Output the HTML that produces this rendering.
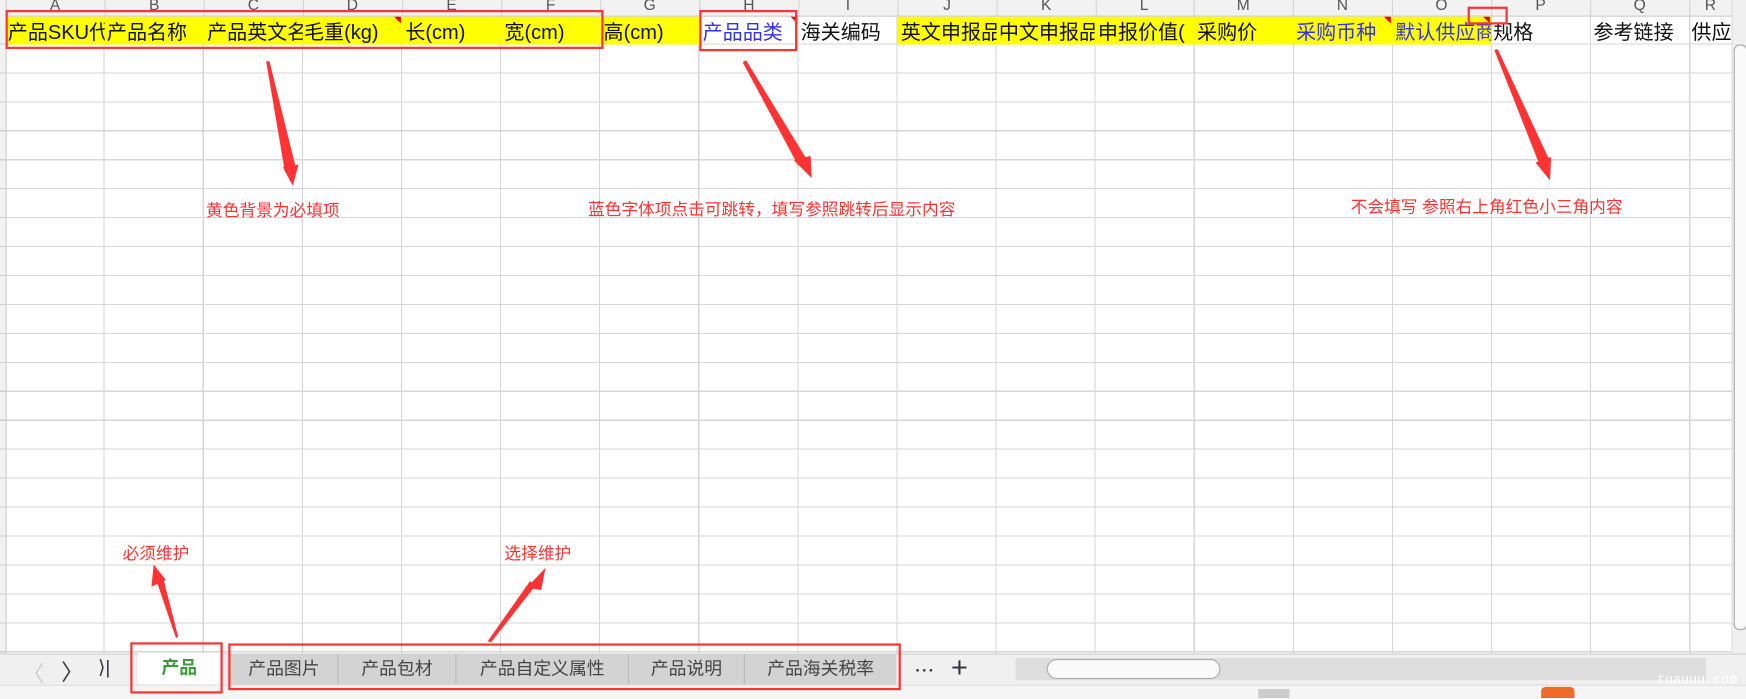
<!DOCTYPE html>
<html><head><meta charset="utf-8"><style>
html,body{margin:0;padding:0;background:#fff;overflow:hidden;width:1746px;height:698px}
#w{position:absolute;left:0;top:0;width:1568px;height:627px;transform:scale(1.11352,1.1132);transform-origin:0 0;font-family:"Liberation Sans","Noto Sans CJK SC",sans-serif}
.a{position:absolute}
.colh{position:absolute;top:0;height:14px;width:89px;text-align:center;font-size:14px;line-height:8px;color:#555;border-right:1px solid #d4d4d4;overflow:hidden}
.c{position:absolute;top:14px;height:26px;line-height:30px;font-size:18px;color:#111;white-space:nowrap;overflow:hidden}
.red{position:absolute;border:2px solid #f33;box-sizing:border-box}
.n{position:absolute;color:#f33;font-size:15px;white-space:nowrap}
.tab{position:absolute;top:588px;height:27px;line-height:27px;font-size:16px;color:#444;text-align:center;border-right:1px solid #b8b8b8;background:#d3d3d3}
</style></head><body><div id="w">
<div class="a" style="left:5px;top:14px;width:1550px;height:573px;background-image:repeating-linear-gradient(to bottom,transparent 0 25px,#d6d6d6 25px 26px),repeating-linear-gradient(to right,transparent 0 88px,#d6d6d6 88px 89px)"></div>
<div class="a" style="left:0;top:0;width:1555px;height:14px;background:#f2f2f2;border-bottom:1px solid #ccc"></div>
<div class="a" style="left:0;top:0;width:5px;height:587px;background:#f2f2f2;border-right:1px solid #ccc"></div>
<div class="a" style="left:0;top:14px;width:5px;height:573px;background-image:repeating-linear-gradient(to bottom,transparent 0 25px,#ccc 25px 26px)"></div>
<div class="colh" style="left:5px">A</div><div class="colh" style="left:94px">B</div><div class="colh" style="left:183px">C</div><div class="colh" style="left:272px">D</div><div class="colh" style="left:361px">E</div><div class="colh" style="left:450px">F</div><div class="colh" style="left:539px">G</div><div class="colh" style="left:628px">H</div><div class="colh" style="left:717px">I</div><div class="colh" style="left:806px">J</div><div class="colh" style="left:895px">K</div><div class="colh" style="left:983px">L</div><div class="colh" style="left:1072px">M</div><div class="colh" style="left:1161px">N</div><div class="colh" style="left:1250px">O</div><div class="colh" style="left:1339px">P</div><div class="colh" style="left:1428px">Q</div><div class="colh" style="left:1517px;width:38px">R</div>
<div class="a" style="left:5px;top:15px;width:623px;height:25px;background:#ff0"></div>
<div class="a" style="left:806px;top:15px;width:533px;height:25px;background:#ff0"></div>
<div class="c" style="left:7px;width:87px">产品SKU代</div>
<div class="c" style="left:96px;width:87px">产品名称</div>
<div class="c" style="left:186px;width:86px">产品英文名</div>
<div class="c" style="left:273px;width:87px">毛重(kg)</div>
<div class="c" style="left:364px">长(cm)</div>
<div class="c" style="left:453px">宽(cm)</div>
<div class="c" style="left:542px">高(cm)</div>
<div class="c" style="left:631px;color:#3333ee">产品品类</div>
<div class="c" style="left:719px;width:86px">海关编码</div>
<div class="c" style="left:809px;width:86px">英文申报品</div>
<div class="c" style="left:897px;width:86px">中文申报品</div>
<div class="c" style="left:986px;width:86px">申报价值(</div>
<div class="c" style="left:1075px">采购价</div>
<div class="c" style="left:1164px;color:#3333ee">采购币种</div>
<div class="c" style="left:1253px;width:86px;color:#3333ee">默认供应商</div>
<div class="c" style="left:1341px">规格</div>
<div class="c" style="left:1431px">参考链接</div>
<div class="c" style="left:1519px;width:36px">供应</div>
<svg class="a" style="left:0;top:0" width="1568" height="627">
<polygon points="354,15 360,15 360,21" fill="#e00"/>
<polygon points="710,15 716,15 716,21" fill="#e00"/>
<polygon points="1243,15 1249,15 1249,21" fill="#e00"/>
<polygon points="1332,15 1338,15 1338,21" fill="#e00"/>
<g fill="#f33">
<polygon points="239,55 242,55 266,152 256,155"/><polygon points="254,150 268,148 263,167"/>
<polygon points="667,56 670,54 725,144 717,149"/><polygon points="713,144 728,140 729,160"/>
<polygon points="1342,45 1345,44 1392,145 1383,149"/><polygon points="1379,146 1393,141 1392,162"/>
<polygon points="160,572 158,573 141,523 147,521"/><polygon points="136,527 149,521 138,507"/>
<polygon points="438,576 441,577 481,526 476,522"/><polygon points="473,528 486,530 490,510"/>
</g>
</svg>
<div class="n" style="left:185px;top:178px">黄色背景为必填项</div>
<div class="n" style="left:528px;top:177px">蓝色字体项点击可跳转，填写参照跳转后显示内容</div>
<div class="n" style="left:1213px;top:175px">不会填写 参照右上角红色小三角内容</div>
<div class="n" style="left:110px;top:486px">必须维护</div>
<div class="n" style="left:453px;top:486px">选择维护</div>
<div class="a" style="left:1555px;top:0;width:13px;height:587px;background:#f0f0f0;border-left:1px solid #ddd"></div>
<div class="a" style="left:1557px;top:40px;width:10px;height:524px;border:1px solid #aaa;border-radius:5px;background:#fafafa"></div>
<div class="a" style="left:0;top:587px;width:1568px;height:28px;background:#f0f0f0;border-top:1px solid #d0d0d0"></div>
<div class="a" style="left:20px;top:589px;font-size:20px;color:#ccc">〈</div>
<div class="a" style="left:55px;top:588px;font-size:20px;color:#334">〉</div>
<div class="a" style="left:88px;top:590px;font-size:17px;color:#334">⟩|</div>
<div class="a" style="left:124px;top:587px;width:74px;height:28px;background:#fff;text-align:center;line-height:28px;font-size:16px;font-weight:bold;color:#3a9a3a">产品</div>
<div class="tab" style="left:207px;width:96px">产品图片</div>
<div class="tab" style="left:304px;width:105px">产品包材</div>
<div class="tab" style="left:410px;width:154px">产品自定义属性</div>
<div class="tab" style="left:565px;width:103px">产品说明</div>
<div class="tab" style="left:669px;width:136px;border:none">产品海关税率</div>
<div class="a" style="left:821px;top:589px;font-size:18px;color:#334">⋯</div>
<div class="a" style="left:854px;top:584px;font-size:26px;color:#334;font-weight:300">+</div>
<div class="a" style="left:912px;top:591px;width:620px;height:20px;background:#dedede"></div>
<div class="a" style="left:940px;top:592px;width:156px;height:18px;background:#fafafa;border:1px solid #aaa;border-radius:9px;box-sizing:border-box"></div>
<div class="a" style="left:0;top:615px;width:1568px;height:12px;background:#f5f5f5;border-top:1px solid #ddd"></div>
<div class="a" style="left:1130px;top:619px;width:28px;height:8px;background:#ccc"></div>
<div class="a" style="left:1384px;top:617px;width:30px;height:10px;background:#f06a2a;border-radius:4px 4px 0 0"></div>
<div class="a" style="left:1488px;top:604px;font-size:12px;color:#fff;font-family:'Liberation Mono',monospace">tuauuu.com</div>
<div class="red" style="left:5px;top:9px;width:537px;height:35px"></div>
<div class="red" style="left:628px;top:9px;width:88px;height:37px"></div>
<div class="red" style="left:1318px;top:6px;width:36px;height:16px"></div>
<div class="red" style="left:117px;top:577px;width:83px;height:46px"></div>
<div class="red" style="left:205px;top:578px;width:604px;height:42px"></div>
</div></body></html>
